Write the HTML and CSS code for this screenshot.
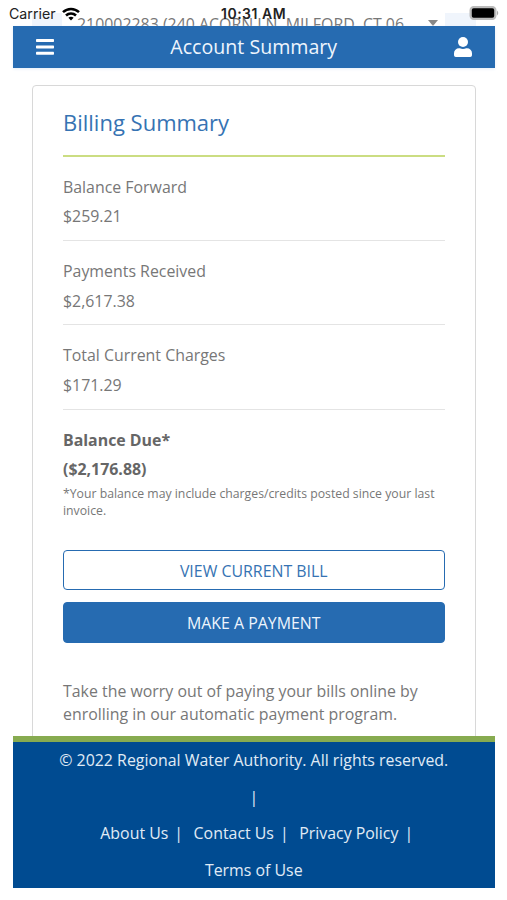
FILE: index.html
```
<!DOCTYPE html>
<html lang="en">
<head>
    <meta charset="UTF-8">
    <meta name="viewport" content="width=device-width, initial-scale=1.0">
    <title>Account Summary</title>
    <link rel="stylesheet" href="styles.css">
</head>
<body>
    <!-- Device status bar -->
    <div class="status-bar">
        <span class="carrier">Carrier</span>
        <svg class="wifi" viewBox="0 0 18 14" fill="none" stroke="#000" stroke-width="2.5">
            <path d="M1 5.200C5.500 .8 12.500 .8 17 5.200"/>
            <path d="M4 8.500C6.800 5.700 11.200 5.700 14 8.500"/>
            <path d="M6.400 10.800C7.800 9.400 10.200 9.400 11.600 10.800L9 13.500Z" fill="#000" stroke="none"/>
        </svg>
        <span class="time">10:31 AM</span>
        <svg class="battery" viewBox="0 0 30 14">
            <rect x=".7" y=".7" width="25.600" height="12.600" rx="3.500" fill="#bbb" stroke="#bbb" stroke-width="1.400"/>
            <rect x="2.300" y="2.300" width="22.400" height="9.400" rx="1.800" fill="#000"/>
            <path d="M27.500 4.500Q30 7 27.500 9.500Z" fill="#aaa"/>
        </svg>
    </div>

    <div class="app">
        <div class="account-picker">
            <div class="account-select">
                <span class="account-name">210002283 (240 ACORN LN, MILFORD, CT 06</span>
                <span class="caret"></span>
            </div>
        </div>

        <header class="header">
            <svg class="menu-icon" viewBox="0 0 18 16" fill="#fff">
                <rect y="0" width="18" height="3" rx=".7"/>
                <rect y="6.400" width="18" height="3" rx=".7"/>
                <rect y="12.800" width="18" height="3" rx=".7"/>
            </svg>
            <h1>Account Summary</h1>
            <svg class="user-icon" viewBox="0 0 18 20" fill="#fff">
                <circle cx="9" cy="5" r="5"/>
                <path d="M5 11.300h.8a7 7 0 0 0 6.400 0h.8a5 5 0 0 1 5 5v2a1.800 1.800 0 0 1-1.800 1.700H1.800A1.800 1.800 0 0 1 0 18.300v-2a5 5 0 0 1 5-5z"/>
            </svg>
        </header>

        <main class="content">
            <section class="card">
                <h2>Billing Summary</h2>

                <div class="bill-row">
                    <div>Balance Forward</div>
                    <div>$259.21</div>
                </div>
                <div class="bill-row">
                    <div>Payments Received</div>
                    <div>$2,617.38</div>
                </div>
                <div class="bill-row">
                    <div>Total Current Charges</div>
                    <div>$171.29</div>
                </div>
                <div class="bill-row total">
                    <div>Balance Due*</div>
                    <div>($2,176.88)</div>
                </div>
                <p class="note">*Your balance may include charges/credits posted since your last invoice.</p>

                <div class="actions">
                    <button class="btn btn-outline">VIEW CURRENT BILL</button>
                    <button class="btn btn-primary">MAKE A PAYMENT</button>
                </div>

                <p class="promo">Take the worry out of paying your bills online by enrolling in our automatic payment program.</p>
            </section>
        </main>

        <footer class="footer">
            <div class="footer-line">© 2022 Regional Water Authority. All rights reserved.</div>
            <div class="footer-line">|</div>
            <div class="footer-line footer-links">
                <a>About Us</a><span>|</span>
                <a>Contact Us</a><span>|</span>
                <a>Privacy Policy</a><span>|</span>
            </div>
            <div class="footer-line">Terms of Use</div>
        </footer>
    </div>
</body>
</html>
```
FILE: styles.css
```
* {
    margin: 0;
    padding: 0;
    box-sizing: border-box;
}

body {
    height: 900px;
    overflow: hidden;
    background: #fff;
    color: #777;
    font-family: "Open Sans", "Noto Sans", sans-serif;
    font-size: 15.9px;
}

/* sits on top of the scrolled page */
.status-bar {
    position: absolute;
    top: 0;
    left: 0;
    z-index: 2;
    width: 507px;
    height: 27px;
    padding: 0 7px 0 9px;
    display: grid;
    grid-template-columns: 53px 18px 1fr auto;
    align-items: center;
    font-family: Inter, "Liberation Sans", sans-serif;
    font-size: 14.2px;
    color: #222;
}

.wifi {
    width: 18px;
    height: 14px;
}

.time {
    padding-left: 141px;
    font-size: 14px;
    font-weight: 600;
    letter-spacing: 0.5px;
}

.battery {
    width: 31px;
    height: 14px;
    margin-top: -1px;
}

.app {
    width: 481.5px;
    height: 887.5px;
    margin-left: 13px;
    display: flex;
    flex-direction: column;
}

.account-picker {
    height: 26px;
    flex-shrink: 0;
    padding: 13px 19px 0;
    overflow: hidden;
}

.account-select {
    height: 30px;
    display: flex;
    justify-content: space-between;
    padding: 0 7px 0 15px;
    border: solid #f0f5fc;
    border-width: 0 31px 0 30px;
    background: #fff;
}

.account-name {
    line-height: 22px;
    white-space: nowrap;
}

.caret {
    width: 0;
    height: 0;
    margin-top: 7px;
    border: 5px solid transparent;
    border-top: 6px solid #888;
    border-bottom: 0;
}

.header {
    height: 42px;
    flex-shrink: 0;
    display: flex;
    justify-content: space-between;
    align-items: center;
    padding: 0 23px;
    background: #266bb1;
    color: #eef5fd;
    box-shadow: 0 1px 3px #e4edf8;
}

.header h1 {
    font-size: 19.6px;
    font-weight: 400;
    line-height: 26px;
}

.menu-icon {
    width: 18px;
    height: 16px;
}

.user-icon {
    width: 18px;
    height: 20px;
}

.content {
    flex: 1;
    min-height: 0;
    overflow: hidden;
    padding: 16.5px 18.5px 0 19px;
}

.card {
    height: 700px;
    padding: 0 30.5px 0 30px;
    border: 1px solid #d8d8d8;
    border-radius: 4px;
}

.card h2 {
    height: 71.6px;
    padding-top: 20px;
    border-bottom: 2px solid #cbdd82;
    color: #3673b3;
    font-size: 22px;
    font-weight: 400;
    line-height: 32px;
}

.bill-row {
    height: 84.2px;
    padding-top: 15.9px;
    border-bottom: 1px solid #e4e4e4;
    line-height: 29.5px;
}

.bill-row.total {
    height: 75.2px;
    padding-top: 16.2px;
    border-bottom: 0;
    color: #666;
    font-weight: 700;
}

.note {
    font-size: 12.25px;
    line-height: 17px;
}

.actions {
    display: flex;
    flex-direction: column;
    gap: 12px;
    margin: 31px 0 37px;
}

.btn {
    height: 40.5px;
    padding-top: 1px;
    border: 1.5px solid #266bb1;
    border-radius: 4px;
    font-family: inherit;
    font-size: 15.9px;
}

.btn-outline {
    background: #fff;
    color: #3673b3;
}

.btn-primary {
    background: #266bb1;
    color: #eef5fd;
}

.promo {
    line-height: 23.4px;
}

.footer {
    height: 151.5px;
    flex-shrink: 0;
    border-top: 6px solid #87ab50;
    background: #004b91;
    color: #e0ebf6;
    text-align: center;
}

.footer-line {
    line-height: 36.6px;
}

.footer-links {
    display: flex;
    justify-content: center;
    padding-left: 6px;
}

.footer-links span {
    margin: 0 10.5px 0 6px;
}

.footer-links span:last-child {
    margin-right: 0;
}
```
